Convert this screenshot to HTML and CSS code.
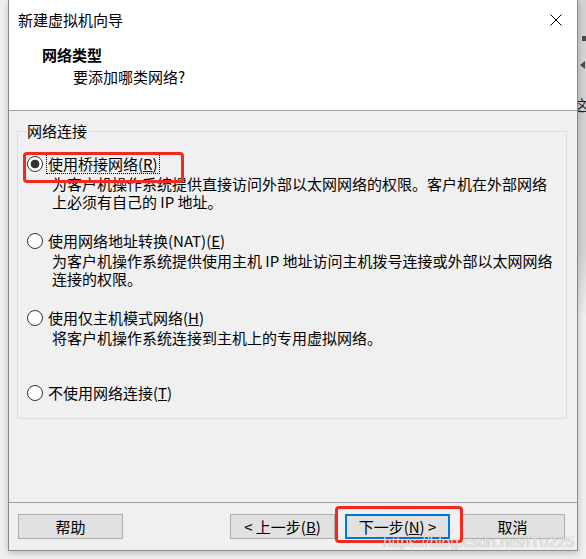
FILE: index.html
```html
<!DOCTYPE html>
<html lang="zh-CN">
<head>
<meta charset="utf-8">
<title>新建虚拟机向导</title>
<link rel="stylesheet" href="styles.css">
</head>
<body>
<div class="screen">
  <div class="window">
    <div class="titlebar">
      <span class="title">新建虚拟机向导</span>
      <svg class="close" width="12" height="12" viewBox="0 0 12 12" aria-hidden="true"><path d="M0.5 0.5L11.5 11.5M11.5 0.5L0.5 11.5" stroke="#000" stroke-width="1" fill="none"/></svg>
    </div>
    <div class="header">
      <div class="h-title">网络类型</div>
      <div class="h-sub">要添加哪类网络?</div>
    </div>
    <div class="content">
      <fieldset class="group">
        <legend>网络连接</legend>
        <div class="option">
          <div class="radio-row"><span class="radio checked"></span><span class="label focus">使用桥接网络(<u>R</u>)</span></div>
          <div class="desc">为客户机操作系统提供直接访问外部以太网网络的权限。客户机在外部网络<br>上必须有自己的 IP 地址。</div>
        </div>
        <div class="option">
          <div class="radio-row"><span class="radio"></span><span class="label">使用网络地址转换(NAT)(<u>E</u>)</span></div>
          <div class="desc">为客户机操作系统提供使用主机 IP 地址访问主机拨号连接或外部以太网网络<br>连接的权限。</div>
        </div>
        <div class="option">
          <div class="radio-row"><span class="radio"></span><span class="label">使用仅主机模式网络(<u>H</u>)</span></div>
          <div class="desc single">将客户机操作系统连接到主机上的专用虚拟网络。</div>
        </div>
        <div class="option">
          <div class="radio-row"><span class="radio"></span><span class="label">不使用网络连接(<u>T</u>)</span></div>
        </div>
      </fieldset>
    </div>
    <div class="footer">
      <button class="btn" type="button">帮助</button>
      <div class="btn-group">
        <button class="btn" type="button">&lt; 上一步(<u>B</u>)</button>
        <button class="btn default" type="button">下一步(<u>N</u>) &gt;</button>
        <button class="btn" type="button">取消</button>
      </div>
    </div>
  </div>
  <div class="strip">
    <span class="frag-square"></span>
    <span class="frag-arrow"></span>
    <span class="frag-text">这</span>
  </div>
</div>
<div class="mark mark-1"></div>
<div class="mark mark-2"></div>
<div class="watermark">https://blog.csdn.net/IT0225</div>
</body>
</html>
```

FILE: styles.css
```css
html, body {
  margin: 0;
  padding: 0;
}
body {
  width: 586px;
  height: 559px;
  overflow: hidden;
  position: relative;
  background: #f0f0f0;
  font-family: "Noto Sans CJK SC", "Microsoft YaHei", sans-serif;
  font-size: 15px;
  color: #000;
}
.screen {
  display: flex;
  height: 559px;
  padding-left: 8px;
  box-sizing: border-box;
}
.window {
  width: 570px;
  height: 551px;
  flex: none;
  box-sizing: border-box;
  border: 1px solid #8a8a8a;
  border-top: 0;
  background: #f0f0f0;
  display: flex;
  flex-direction: column;
  box-shadow: 0 2px 7px rgba(0, 0, 0, 0.22);
  position: relative;
  z-index: 1;
}
.titlebar {
  height: 40px;
  flex: none;
  background: #fff;
  display: flex;
  align-items: center;
  padding-left: 9px;
}
.title {
  line-height: 20px;
}
.close {
  margin-left: auto;
  margin-right: 15px;
  display: block;
}
.header {
  flex: none;
  background: #fff;
  padding: 4px 0 22px 33px;
  border-bottom: 1px solid #a0a0a0;
  line-height: 22px;
}
.h-title {
  font-weight: 700;
}
.h-sub {
  padding-left: 31px;
}
.content {
  flex: 1;
  padding: 11px 10px 0 8px;
}
.group {
  margin: 0;
  padding: 0 0 14px 0;
  border: 1px solid #dcdcdc;
  min-width: 0;
}
.group legend {
  margin-left: 7px;
  padding: 0 2px;
  line-height: 18px;
}
.option:first-of-type {
  margin-top: 13px;
}
.option + .option {
  margin-top: 19px;
}
.radio-row {
  height: 22px;
  display: flex;
  align-items: center;
  padding-left: 9px;
}
.radio {
  width: 16px;
  height: 16px;
  box-sizing: border-box;
  border: 1px solid #333;
  border-radius: 50%;
  background: #fff;
  flex: none;
}
.radio.checked {
  background: radial-gradient(circle at center, #333 0, #333 4px, #fff 4.7px);
}
.label {
  margin-left: 3px;
  padding: 0 1px;
  border: 1px dotted transparent;
  line-height: 18px;
  white-space: nowrap;
}
.label.focus {
  border-color: #000;
}
.desc {
  padding-left: 34px;
  line-height: 18px;
  white-space: nowrap;
}
.desc.single {
  min-height: 34px;
}
.footer {
  flex: none;
  height: 48px;
  box-sizing: border-box;
  border-top: 1px solid #a0a0a0;
  padding: 11px 12px 0 9px;
  display: flex;
  justify-content: space-between;
  align-items: flex-start;
}
.btn-group {
  display: flex;
  gap: 10px;
}
.btn {
  width: 105px;
  height: 25px;
  box-sizing: border-box;
  border: 1px solid #adadad;
  background: #e1e1e1;
  font: inherit;
  font-size: 15px;
  line-height: 20px;
  color: #000;
  padding: 0;
  margin: 0;
}
.btn.default {
  border: 2px solid #0078d7;
}
.strip {
  flex: 1;
  overflow: hidden;
  display: flex;
  flex-direction: column;
  align-items: flex-start;
  background: linear-gradient(#d2d2d2 0, #d2d2d2 250px, #f0f0f0 320px);
}
.frag-square {
  display: block;
  width: 4px;
  height: 5px;
  margin: 36px 0 0 4px;
  background: #4a4a4a;
}
.frag-arrow {
  display: block;
  width: 0;
  height: 0;
  margin: 20px 0 0 2px;
  border-top: 4px solid transparent;
  border-bottom: 4px solid transparent;
  border-right: 5px solid #4a4a4a;
}
.frag-text {
  display: block;
  margin: 27px 0 0 -5px;
  line-height: 18px;
  font-size: 15px;
  color: #222;
}
.mark {
  position: absolute;
  box-sizing: border-box;
  border: 3px solid #f3281e;
  border-radius: 4px;
  z-index: 5;
}
.mark-1 {
  left: 23px;
  top: 152px;
  width: 161px;
  height: 31px;
}
.mark-2 {
  left: 335px;
  top: 506px;
  width: 128px;
  height: 37px;
}
.watermark {
  position: absolute;
  left: 383px;
  top: 533px;
  z-index: 6;
  font-family: "Liberation Sans", Arial, sans-serif;
  font-size: 15.5px;
  line-height: 18px;
  color: rgba(255, 255, 255, 0.82);
  text-shadow: 0 0 1px rgba(0, 0, 0, 0.45);
  white-space: nowrap;
}
```
